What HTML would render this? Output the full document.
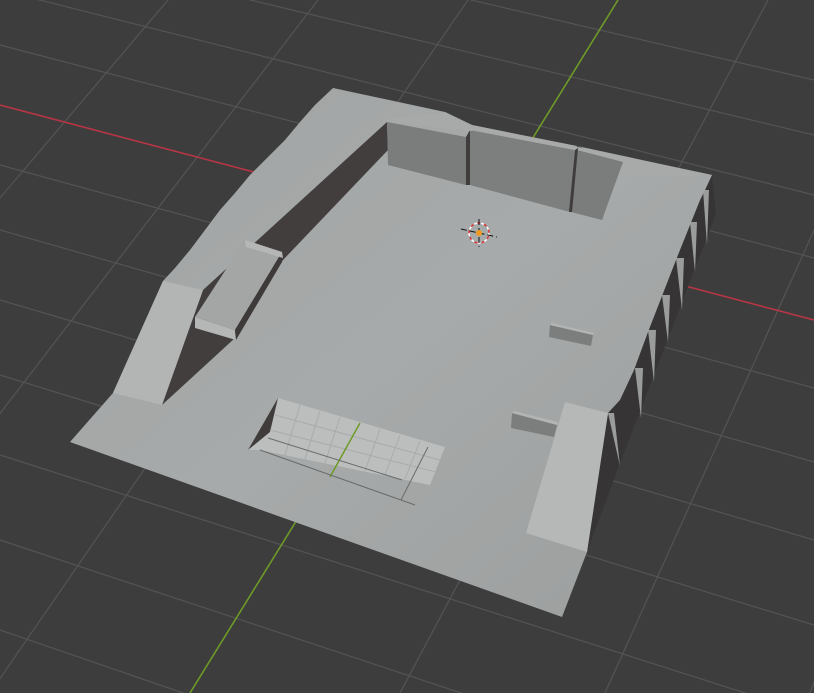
<!DOCTYPE html>
<html><head><meta charset="utf-8"><style>
html,body{margin:0;padding:0;background:#3d3d3d;width:814px;height:693px;overflow:hidden}
svg{display:block}
</style></head><body>
<svg width="814" height="693" viewBox="0 0 814 693" xmlns="http://www.w3.org/2000/svg">
<defs>
<linearGradient id="fl" x1="0" y1="0" x2="1" y2="1">
<stop offset="0" stop-color="#a2a4a4"/><stop offset="0.5" stop-color="#a7aaaa"/><stop offset="1" stop-color="#9c9e9e"/>
</linearGradient>
</defs>
<rect width="814" height="693" fill="#3d3d3d"/>
<g stroke="#545454" stroke-width="1.2" fill="none">
<line x1="0" y1="-10" x2="814" y2="195"/>
<line x1="0" y1="45" x2="814" y2="258"/>
<line x1="0" y1="165" x2="814" y2="388"/>
<line x1="0" y1="230" x2="814" y2="462"/>
<line x1="0" y1="300" x2="814" y2="540"/>
<line x1="0" y1="375" x2="814" y2="625"/>
<line x1="0" y1="455" x2="814" y2="715"/>
<line x1="0" y1="540" x2="814" y2="810"/>
<line x1="0" y1="630" x2="814" y2="910"/>
<line x1="0" y1="-60" x2="814" y2="135"/>
<line x1="0" y1="-110" x2="814" y2="80"/>
<line x1="168" y1="0" x2="-420" y2="693"/>
<line x1="318" y1="0" x2="-215" y2="693"/>
<line x1="468" y1="0" x2="-10" y2="693"/>
<line x1="768" y1="0" x2="400" y2="693"/>
<line x1="918" y1="0" x2="605" y2="693"/>
<line x1="1068" y1="0" x2="810" y2="693"/>
<line x1="1218" y1="0" x2="1015" y2="693"/>
<line x1="1368" y1="0" x2="1220" y2="693"/>
</g>
<line x1="0" y1="105" x2="814" y2="320" stroke="#b83545" stroke-width="1.6"/>
<line x1="618" y1="0" x2="190" y2="693" stroke="#6e9a28" stroke-width="1.6"/>

<polygon points="712,175 716,214 620,463 587,552 608,413" fill="#363434"/>
<g fill="#9a9c9c">
<polygon points="703,190 709,190 707,245"/>
<polygon points="690,222 697,222 695,272"/>
<polygon points="676,258 684,258 682,310"/>
<polygon points="662,295 670,295 668,342"/>
<polygon points="648,330 656,330 654,382"/>
<polygon points="635,368 643,368 641,418"/>
<polygon points="608,413 614,413 620,466"/>
</g>
<polygon points="333,88 445,112 472,125 712,175 705,190 700,200 690,225 676,260 662,296 648,332 634,370 620,400 608,413 587,552 562,617 70,442 113,393 163,281 175,268 190,250 205,230 220,210 235,193 250,175 270,155 285,140 300,122 315,105" fill="url(#fl)"/>
<polygon points="387,122 203,290 162,405 235,338 283,260 388,150" fill="#433e3e"/>
<polygon points="163,281 203,290 162,405 113,393" fill="#b3b5b5"/>
<polygon points="245,240 282,252 235,330 195,317" fill="#a4a6a6"/>
<polygon points="195,317 235,330 236,340 195,328" fill="#b5b7b7"/>
<polygon points="235,330 282,252 282,262 236,340" fill="#3e3a3a"/>
<polygon points="245,240 282,252 283,258 246,247" fill="#b5b7b7"/>
<polygon points="387,122 466,137 466,185 388,165" fill="#7b7c7c"/>
<polygon points="470,130 575,150 570,212 470,185" fill="#7d7e7e"/>
<polygon points="577,150 623,162 602,220 571,212" fill="#7b7c7c"/>
<polygon points="466,137 470,130 470,185 466,185" fill="#3f3c3c"/>
<polygon points="575,150 578,148 572,212 569,212" fill="#3f3c3c"/>
<polygon points="385,120 445,112 472,125 472,131 387,122" fill="#a8aaaa"/>
<polygon points="472,125 577,146 575,150 470,130" fill="#a8aaaa"/>
<polygon points="577,146 712,175 623,178 623,162" fill="#a8aaaa"/>
<polygon points="565,402 608,413 587,552 526,533" fill="#b6b8b8"/>
<polygon points="550,325 593,335 591,346 549,337" fill="#7c7e7e"/>
<polygon points="550,325 552,323 594,333 593,335" fill="#b3b5b5"/>
<polygon points="512,413 557,425 554,437 511,428" fill="#7c7e7e"/>
<polygon points="512,413 514,411 558,422 557,425" fill="#b3b5b5"/>
<polygon points="278,398 445,447 430,485 260,450 248,450" fill="#bcbebe"/>
<polygon points="278,398 270,432 248,450" fill="#403c3c"/>
<g stroke="#a9abab" stroke-width="1">
<line x1="300" y1="405" x2="285" y2="455"/><line x1="320" y1="411" x2="305" y2="459"/>
<line x1="340" y1="417" x2="325" y2="463"/><line x1="380" y1="429" x2="365" y2="471"/>
<line x1="400" y1="435" x2="385" y2="475"/><line x1="420" y1="441" x2="405" y2="479"/>
<line x1="275" y1="415" x2="440" y2="460"/><line x1="270" y1="430" x2="436" y2="472"/>
</g>
<line x1="360" y1="423" x2="330" y2="477" stroke="#6e9a28" stroke-width="1.5"/>
<g stroke="#6a6c6c" stroke-width="1">
<line x1="260" y1="450" x2="415" y2="505"/>
<line x1="268" y1="438" x2="402" y2="480"/>
<line x1="428" y1="447" x2="401" y2="500"/>
</g>
<g transform="translate(479,233)">
<circle r="10" fill="none" stroke="#fff" stroke-width="1.5" stroke-dasharray="4 3"/>
<circle r="10" fill="none" stroke="#d33" stroke-width="1.5" stroke-dasharray="3 4" stroke-dashoffset="4"/>
<line x1="-18" y1="-4" x2="18" y2="4" stroke="#111" stroke-width="1" stroke-dasharray="6 3"/>
<line x1="0" y1="-14" x2="0" y2="14" stroke="#111" stroke-width="1" stroke-dasharray="6 3"/>
<circle r="3" fill="#f29a1e"/>
</g>
</svg>
</body></html>
